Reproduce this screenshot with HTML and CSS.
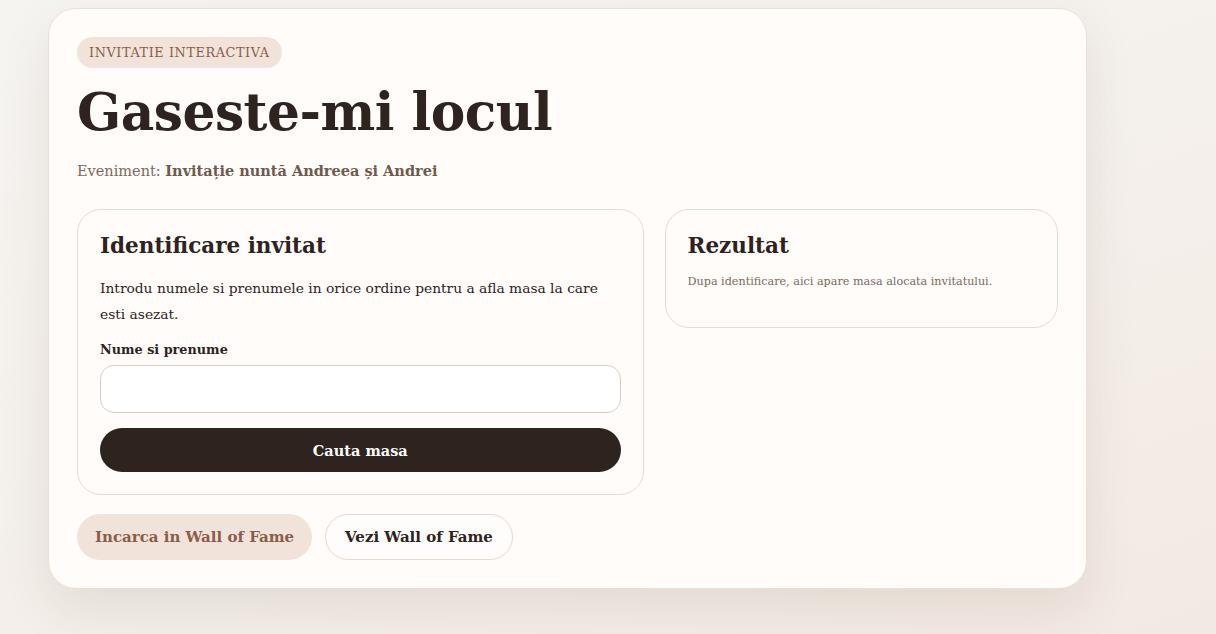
FILE: index.html
```html
<!DOCTYPE html>
<html lang="ro">
<head>
    <meta charset="UTF-8">
    <meta name="viewport" content="width=device-width, initial-scale=1.0">
    <title>Gaseste-mi locul</title>
    <link rel="stylesheet" href="styles.css">
</head>
<body>
    <main class="page">
        <section class="card">
            <span class="badge">Invitatie interactiva</span>
            <h1>Gaseste-mi locul</h1>
            <p class="event">Eveniment: <strong>Invitație nuntă Andreea și Andrei</strong></p>

            <div class="grid">
                <div class="panel">
                    <h2>Identificare invitat</h2>
                    <p class="intro">Introdu numele si prenumele in orice ordine pentru a afla masa la care esti asezat.</p>
                    <form class="search-form" onsubmit="return false;">
                        <label for="guest-name">Nume si prenume</label>
                        <input type="text" id="guest-name" autocomplete="off">
                        <button type="submit" class="btn-dark">Cauta masa</button>
                    </form>
                </div>
                <div class="panel result">
                    <h2>Rezultat</h2>
                    <p class="hint">Dupa identificare, aici apare masa alocata invitatului.</p>
                </div>
            </div>

            <div class="actions">
                <a href="#" class="pill pill-soft">Incarca in Wall of Fame</a>
                <a href="#" class="pill pill-outline">Vezi Wall of Fame</a>
            </div>
        </section>
    </main>
</body>
</html>
```

FILE: styles.css
```css
* {
    box-sizing: border-box;
}

html, body {
    height: 100%;
}

body {
    margin: 0;
    font-family: "DejaVu Serif", Georgia, serif;
    color: #2e231e;
    background: linear-gradient(160deg, #f6f4f1 0%, #f4efea 60%, #f3e9e3 100%);
}

.page {
    padding: 8px 0 0 48px;
}

.card {
    width: 1039px;
    padding: 28px 28px 28px;
    background: #fffcf9;
    border: 1px solid #eddfd6;
    border-radius: 28px;
    box-shadow: 0 20px 50px rgba(90, 60, 40, 0.10);
}

.badge {
    display: inline-block;
    padding: 7px 12px 7px;
    background: #f1e3da;
    color: #8a5d47;
    border-radius: 16px;
    font-size: 12.8px;
    letter-spacing: 0.6px;
    text-transform: uppercase;
    line-height: 17px;
}

h1 {
    margin: 12px 0 0;
    font-size: 51.8px;
    line-height: 64px;
    font-weight: bold;
    color: #2e231e;
    letter-spacing: -0.5px;
}

.event {
    margin: 18px 0 0;
    font-size: 14.5px;
    color: #7b6a60;
}

    .event strong {
        color: #6e5a4e;
    }

.grid {
    display: grid;
    grid-template-columns: 1.44fr 1fr;
    gap: 21px;
    align-items: start;
    margin-top: 30px;
}

.panel {
    border: 1px solid #e9dbd0;
    border-radius: 24px;
    padding: 21px 22px 22px;
    background: #fffcf9;
}

h2 {
    margin: 0;
    font-size: 21.5px;
    line-height: 30px;
    font-weight: bold;
}

.intro {
    margin: 14px 0 0;
    font-size: 13.8px;
    line-height: 26px;
}

.search-form {
    display: flex;
    flex-direction: column;
    margin-top: 14px;
}

    .search-form label {
        font-size: 12.8px;
        font-weight: bold;
        line-height: 18px;
    }

    .search-form input {
        margin-top: 6px;
        height: 48px;
        border: 1px solid #dcccc0;
        border-radius: 14px;
        background: #fff;
        padding: 0 14px;
        font: inherit;
        font-size: 15px;
    }

.btn-dark {
    margin-top: 15px;
    height: 44px;
    border: none;
    border-radius: 22px;
    background: #2e231e;
    color: #fff;
    font: inherit;
    font-size: 14.5px;
    font-weight: bold;
    cursor: pointer;
}

.result {
    padding-bottom: 36px;
}

.hint {
    margin: 12px 0 0;
    font-size: 11.2px;
    line-height: 18px;
    color: #7b6a60;
}

.actions {
    display: flex;
    gap: 13px;
    margin-top: 19px;
}

.pill {
    display: inline-flex;
    align-items: center;
    height: 46px;
    padding: 0 18px;
    border-radius: 23px;
    font-size: 15px;
    font-weight: bold;
    text-decoration: none;
}

.pill-soft {
    background: #f1e3da;
    color: #8a5d47;
}

.pill-outline {
    padding: 0 19px;
    background: #fffdfb;
    border: 1px solid #e6d8cc;
    color: #2e231e;
}
```
